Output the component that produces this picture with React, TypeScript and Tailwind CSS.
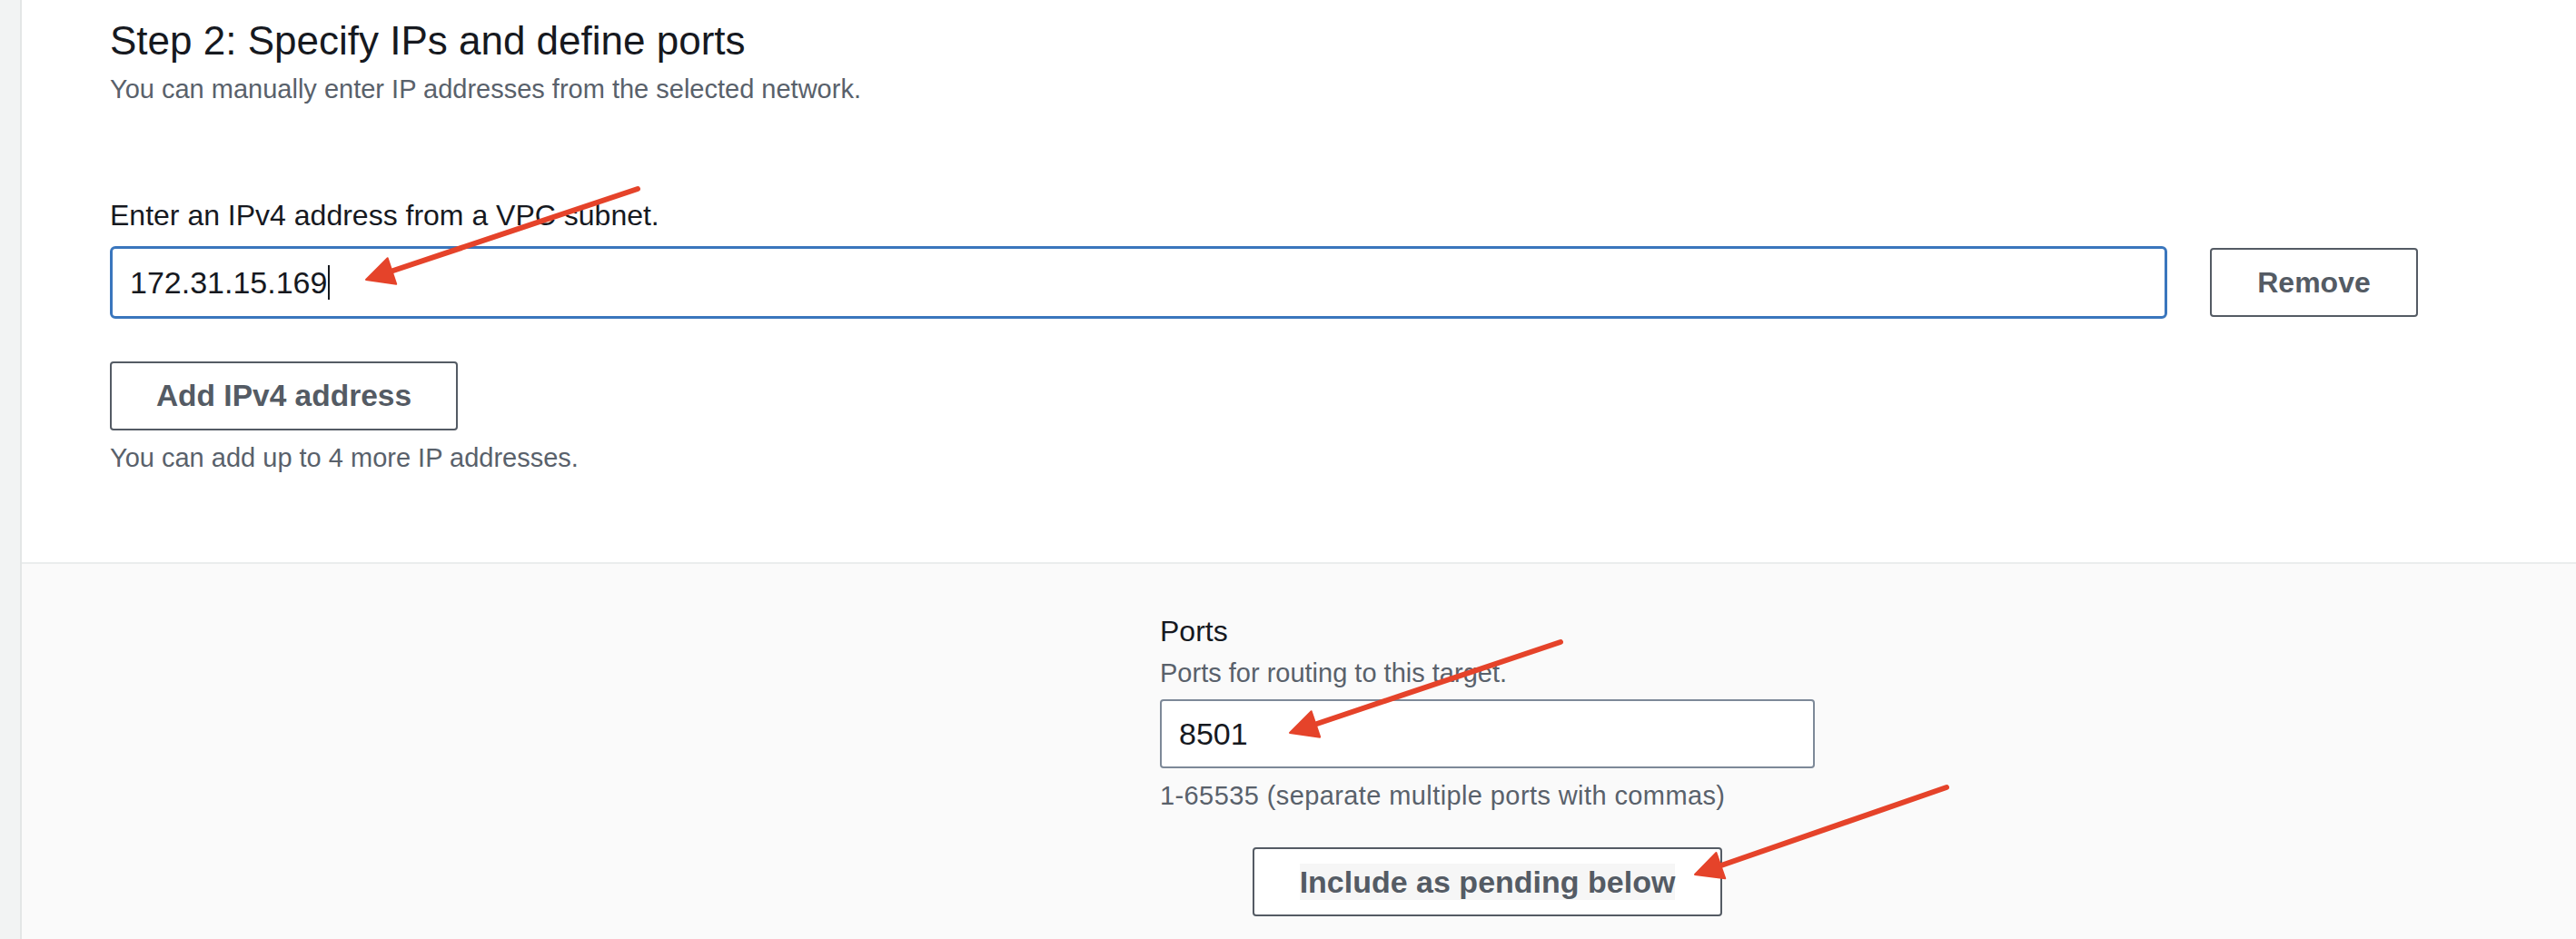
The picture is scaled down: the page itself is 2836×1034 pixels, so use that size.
import React from 'react'

type Arrow = { from: [number, number]; to: [number, number] }

const arrows: Arrow[] = [
  { from: [702, 208], to: [403, 308] },
  { from: [1718, 707], to: [1420, 807] },
  { from: [2143, 867], to: [1866, 963] },
]

// red annotation arrows drawn over the screenshot
function Annotations() {
  return (
    <svg className="pointer-events-none absolute left-0 top-0" width={2836} height={1034} viewBox="0 0 2836 1034">
      {arrows.map((a, i) => {
        const [x1, y1] = a.from
        const [x2, y2] = a.to
        const len = Math.hypot(x2 - x1, y2 - y1)
        const dx = (x2 - x1) / len
        const dy = (y2 - y1) / len
        const head = 30
        const half = 15
        const bx = x2 - dx * head
        const by = y2 - dy * head
        const pts = `${x2},${y2} ${bx - dy * half},${by + dx * half} ${bx + dy * half},${by - dx * half}`
        return (
          <g key={i}>
            <line x1={x1} y1={y1} x2={bx + dx * 4} y2={by + dy * 4} stroke="#e5432a" strokeWidth={6} strokeLinecap="round" />
            <polygon points={pts} fill="#e5432a" stroke="#e5432a" strokeWidth={2} strokeLinejoin="round" />
          </g>
        )
      })}
    </svg>
  )
}

export default function App() {
  return (
    <div className="relative flex h-[1034px] w-[2836px] overflow-hidden bg-white font-['Liberation_Sans',Arial,sans-serif]">
      <div className="w-[24px] shrink-0 border-r-2 border-[#e3e6e6] bg-[#f2f3f3]" />

      <div className="flex flex-1 flex-col">
        {/* step section */}
        <div className="border-b-2 border-[#eaeded] pb-[97px] pl-[97px] pt-[21px]">
          <h2 className="text-[44px] leading-[48px] text-[#16191f]">Step 2: Specify IPs and define ports</h2>
          <p className="mt-[11px] text-[29px] leading-[36px] text-[#59616b]">
            You can manually enter IP addresses from the selected network.
          </p>

          <div className="mt-[101px] text-[32px] leading-[40px] text-[#16191f]">Enter an IPv4 address from a VPC subnet.</div>
          <div className="mt-[14px] flex items-center gap-[47px]">
            <div className="flex h-[80px] w-[2265px] items-center rounded-[6px] border-[3px] border-[#3a76bd] bg-white pl-[19px] text-[34px] text-[#16191f]">
              <span>172.31.15.169</span>
              <span className="ml-[1px] h-[38px] w-[2px] bg-[#16191f]" />
            </div>
            <button className="h-[76px] w-[229px] rounded-[4px] border-2 border-[#545b64] bg-white text-[32px] font-bold text-[#545b64]">
              Remove
            </button>
          </div>

          <button className="mt-[47px] h-[76px] w-[383px] rounded-[4px] border-2 border-[#545b64] bg-white text-[33.5px] font-bold text-[#545b64]">
            Add IPv4 address
          </button>
          <p className="mt-[12px] text-[29px] leading-[36px] text-[#59616b]">You can add up to 4 more IP addresses.</p>
        </div>

        {/* ports section */}
        <div className="flex-1 bg-[#fafafa] pl-[1253px] pt-[54px]">
          <div className="flex w-[721px] flex-col">
            <div className="text-[32px] leading-[40px] text-[#16191f]">Ports</div>
            <div className="mt-[8px] text-[29px] leading-[36px] text-[#59616b]">Ports for routing to this target.</div>
            <div className="mt-[11px] flex h-[76px] items-center rounded-[4px] border-2 border-[#7d8998] bg-white pl-[19px] text-[34px] text-[#16191f]">
              8501
            </div>
            <div className="mt-[12px] text-[29px] leading-[36px] tracking-[0.4px] text-[#59616b]">
              1-65535 (separate multiple ports with commas)
            </div>
            <div className="mt-[39px] flex justify-center">
              <button className="flex h-[76px] w-[517px] items-center justify-center rounded-[4px] border-2 border-[#545b64] bg-white text-[34px] font-bold text-[#545b64]">
                <span className="bg-[#f6f6f6] leading-[40px]">Include as pending below</span>
              </button>
            </div>
          </div>
        </div>
      </div>

      <Annotations />
    </div>
  )
}
